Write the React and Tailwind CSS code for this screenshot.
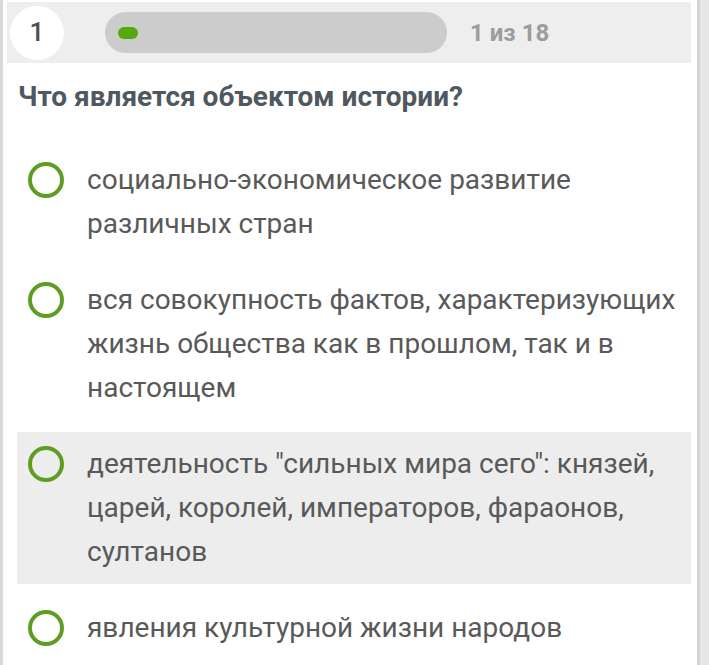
import React from "react";

const options = [
  { text: "социально-экономическое развитие различных стран", active: false },
  { text: "вся совокупность фактов, характеризующих жизнь общества как в прошлом, так и в настоящем", active: false },
  { text: "деятельность \"сильных мира сего\": князей, царей, королей, императоров, фараонов, султанов", active: true },
  { text: "явления культурной жизни народов", active: false },
];

const Option = ({ text, active }) => (
  <div className={`${active ? "bg-[#ededed]" : ""} flex items-start ml-[14px] w-[674px] py-[10px] pl-[11px] pr-2`}>
    <span className="mt-[4px] w-[36px] h-[36px] rounded-full border-[4px] border-[#5e9c22] shrink-0"></span>
    <p className="ml-[23px] text-[28px] leading-[44px] text-[#595959]">{text}</p>
  </div>
);

const App = () => {
  return (
    <div className="flex w-[709px] h-[665px] overflow-hidden bg-white" style={{ fontFamily: "Roboto, sans-serif" }}>
      <div className="w-[3px] bg-[#d9d9d9]"></div>
      <div className="flex-1 flex flex-col bg-white">
        <div className="mt-[2px] ml-[4px] w-[684px] h-[61px] bg-[#eeeeee] flex items-center">
          <div className="ml-[3px] w-[54px] h-[54px] rounded-full bg-white flex items-center justify-center text-[26px] font-medium text-[#4a4f52]">
            1
          </div>
          <div className="ml-[41px] w-[342px] h-[41px] rounded-full bg-[#cccccc] flex items-center pl-[13px]">
            <span className="w-[20px] h-[12px] rounded-full bg-[#56a80e]"></span>
          </div>
          <span className="ml-[23px] text-[24px] font-bold text-[#9c9c9c]">1 из 18</span>
        </div>
        <h1 className="mt-[16px] ml-[15px] text-[28px] leading-[36px] font-bold text-[#4f585e]">
          Что является объектом истории?
        </h1>
        <div className="mt-[33px] flex flex-col gap-[12px]">
          {options.map((o, i) => (
            <Option key={i} text={o.text} active={o.active} />
          ))}
        </div>
      </div>
      <div className="w-[12px] flex">
        <div className="w-[3px] bg-[#d4d4d4]"></div>
        <div className="flex-1 bg-[#e6e6e6]"></div>
      </div>
    </div>
  );
};

export default App;
